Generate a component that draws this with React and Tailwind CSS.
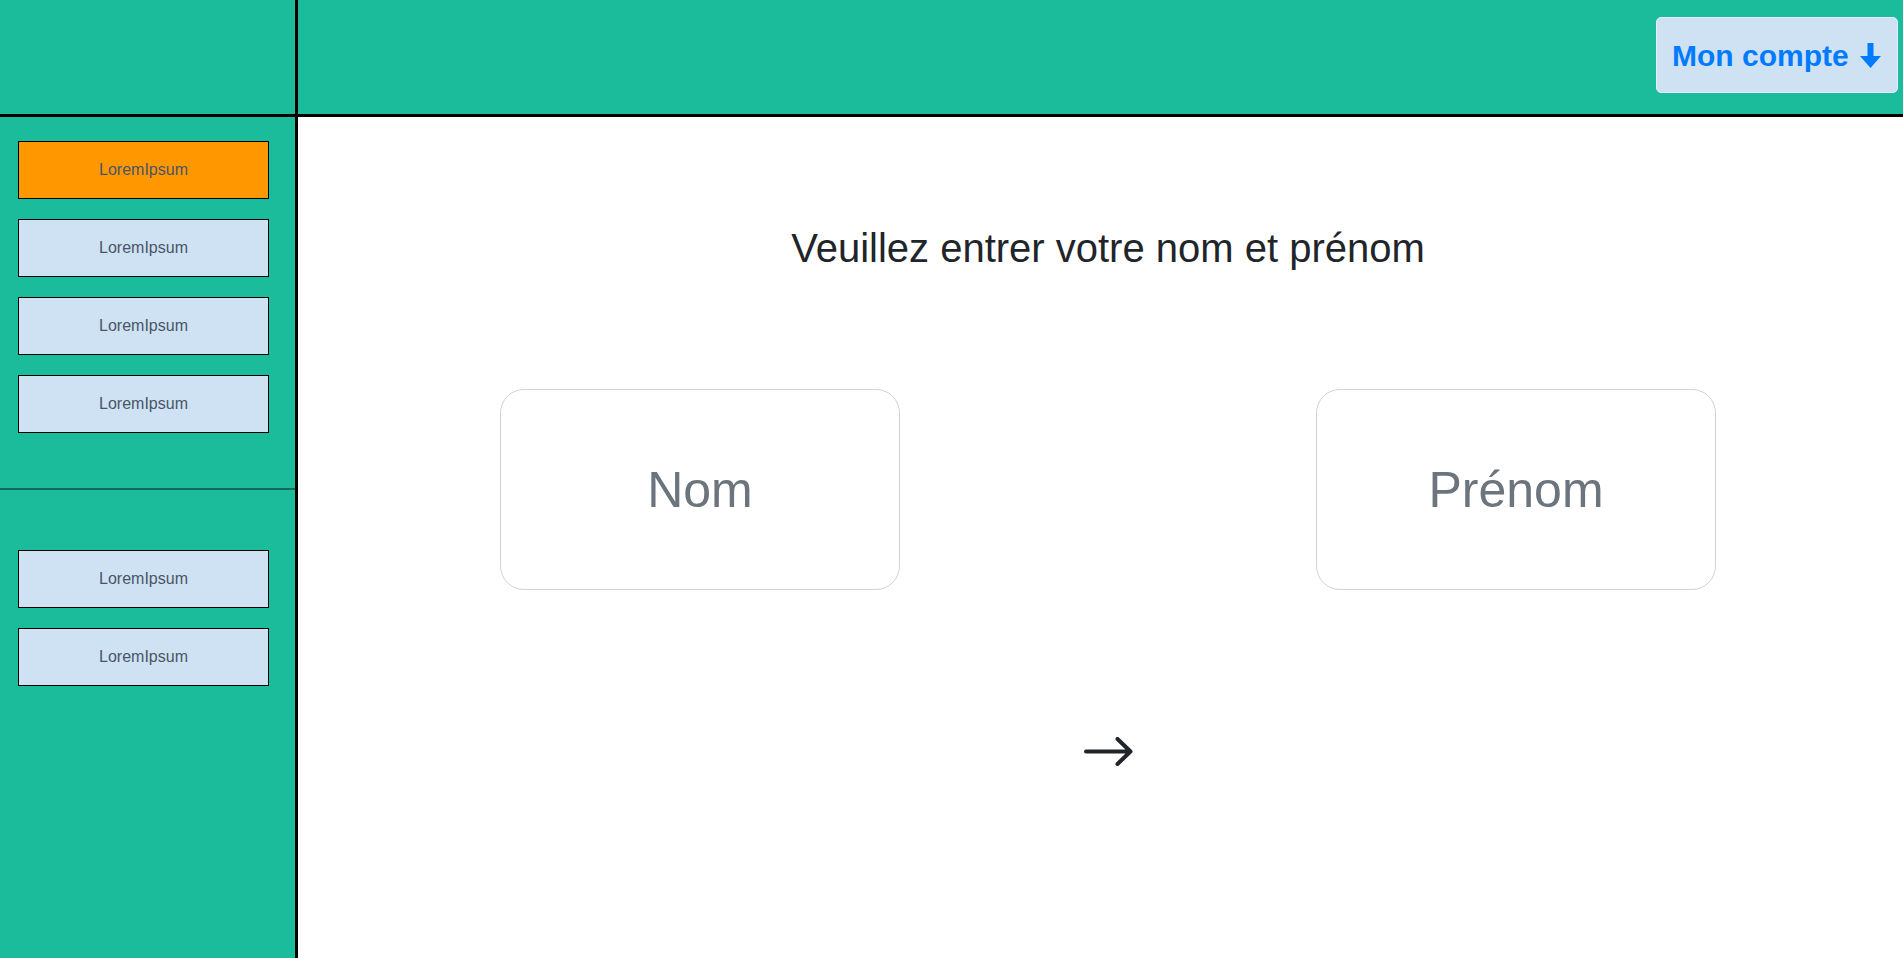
import React from "react";

function SideButton({ active, children }) {
  return (
    <button
      className={
        "block w-[251px] h-[58px] border border-black text-[16px] text-[#4a5568] " +
        (active ? "bg-[#ff9800]" : "bg-[#cfe2f3]")
      }
      style={{ fontFamily: '"Liberation Sans", Arial, sans-serif' }}
    >
      {children}
    </button>
  );
}

export default function App() {
  return (
    <div
      className="flex w-full h-[958px] overflow-hidden bg-white"
      style={{ fontFamily: '"Liberation Sans", Arial, sans-serif' }}
    >
      {/* Sidebar column */}
      <aside className="w-[298px] shrink-0 h-full bg-[#1abc9c] border-r-[3px] border-black flex flex-col">
        <div className="h-[117px] shrink-0 border-b-[3px] border-black" />
        <div className="flex flex-col gap-[20px] pl-[18px] pt-[24px]">
          <SideButton active>LoremIpsum</SideButton>
          <SideButton>LoremIpsum</SideButton>
          <SideButton>LoremIpsum</SideButton>
          <SideButton>LoremIpsum</SideButton>
        </div>
        <div className="mt-[55px] h-[2px] w-full bg-[#15675c]" />
        <div className="flex flex-col gap-[20px] pl-[18px] pt-[60px]">
          <SideButton>LoremIpsum</SideButton>
          <SideButton>LoremIpsum</SideButton>
        </div>
      </aside>

      {/* Right column */}
      <div className="flex-1 flex flex-col min-w-0">
        <header className="h-[117px] shrink-0 bg-[#1abc9c] border-b-[3px] border-black flex justify-end items-start pt-[17px] pr-[5px]">
          <button className="h-[76px] w-[242px] rounded-[5px] bg-[#cfe2f3] border border-[#e3eef8] flex items-center pl-[15px] gap-[11px] text-[#007bff] font-bold text-[30px]">
            <span>Mon compte</span>
            <svg width="21" height="25" viewBox="0 0 21 25" className="shrink-0">
              <rect x="7.5" y="0" width="6" height="14" fill="#007bff" />
              <polygon points="0,13 21,13 10.5,25" fill="#007bff" />
            </svg>
          </button>
        </header>

        <main className="flex-1 flex flex-col items-center pl-[15px]">
          <h1 className="mt-[107px] text-[40px] leading-[48px] font-normal text-[#212529]">
            Veuillez entrer votre nom et prénom
          </h1>
          <div className="mt-[117px] w-[1216px] flex justify-between">
            <input
              type="text"
              placeholder="Nom"
              className="w-[400px] h-[201px] rounded-[24px] border border-[#ced4da] bg-white text-center text-[50px] text-[#495057] placeholder:text-[#6c757d] outline-none"
            />
            <input
              type="text"
              placeholder="Prénom"
              className="w-[400px] h-[201px] rounded-[24px] border border-[#ced4da] bg-white text-center text-[50px] text-[#495057] placeholder:text-[#6c757d] outline-none"
            />
          </div>
          <button className="mt-[147px] block">
            <svg width="49" height="29" viewBox="0 0 49 29" fill="none">
              <path
                d="M2 14.5 H46.5 M33.5 2 L46.5 14.5 L33.5 27"
                stroke="#212529"
                strokeWidth="4"
                strokeLinecap="round"
                strokeLinejoin="round"
              />
            </svg>
          </button>
        </main>
      </div>
    </div>
  );
}
